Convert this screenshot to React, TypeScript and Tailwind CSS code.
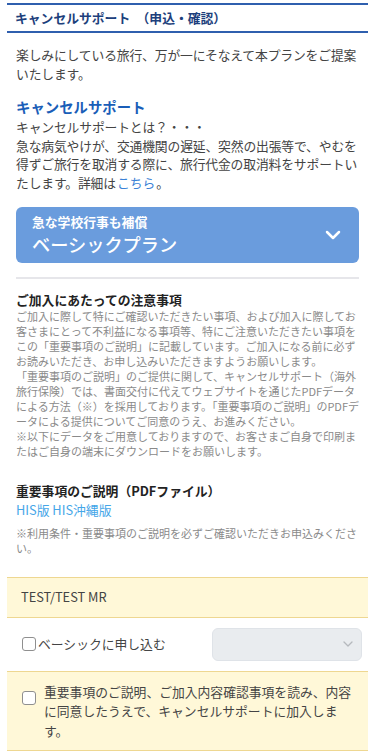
import React from "react";

const jp = { fontFamily: '"Noto Sans CJK JP", "Noto Sans", sans-serif' };

function Box() {
  return <span className="inline-block w-[14px] h-[14px] shrink-0 rounded-[3px] border border-[#8f8f8f] bg-white" />;
}

export default function App() {
  return (
    <div style={jp} className="w-[375px] min-h-[755px] bg-white px-[7px] pt-[3px] text-[#444]">
      <div className="border-y-2 border-[#2f5fae] h-[30px] flex items-center px-[8px]">
        <span className="text-[12.8px] font-bold text-[#1d3f7c] leading-none whitespace-pre">キャンセルサポート　（申込・確認）</span>
      </div>

      <div className="px-[9px]">
        <p className="mt-[13px] text-[12.8px] tracking-[-0.15px] leading-[18.6px] text-[#444]">
          楽しみにしている旅行、万が一にそなえて本プランをご提案いたします。
        </p>

        <h2 className="mt-[13px] text-[14.4px] leading-[21px] font-bold text-[#1a5eb8]">キャンセルサポート</h2>
        <p className="mt-[1px] text-[12.8px] tracking-[-0.15px] leading-[18.6px] text-[#444]">
          キャンセルサポートとは？・・・
          <br />
          急な病気やけが、交通機関の遅延、突然の出張等で、やむを得ずご旅行を取消する際に、旅行代金の取消料をサポートいたします。詳細は<a className="inline-block mx-[1px] tracking-normal leading-[18.6px] text-[#3b82d6]">こちら</a>。
        </p>

        <div className="mt-[14px] h-[56px] rounded-[6px] bg-[#6a9cdd] flex items-center justify-between pl-[16px] pr-[18px]">
          <div className="flex flex-col text-white">
            <span className="block text-[12.8px] font-bold leading-[19px]">急な学校行事も補償</span>
            <span className="block text-[18.2px] font-medium leading-[26px]">ベーシックプラン</span>
          </div>
          <svg width="16" height="10" viewBox="0 0 16 10" fill="none">
            <path d="M2 2l6 6 6-6" stroke="white" strokeWidth="2.5" strokeLinecap="round" strokeLinejoin="round" />
          </svg>
        </div>

        <div className="mt-[14px] h-[2px] bg-[#e6e6ea]" />

        <h3 className="mt-[11px] text-[12.8px] leading-[19px] font-bold text-[#222]">ご加入にあたっての注意事項</h3>
        <p className="text-[11px] leading-[15px] text-[#8a8a8a]">
          ご加入に際して特にご確認いただきたい事項、および加入に際してお客さまにとって不利益になる事項等、特にご注意いただきたい事項をこの「重要事項のご説明」に記載しています。ご加入になる前に必ずお読みいただき、お申し込みいただきますようお願いします。
          <br />
          「重要事項のご説明」のご提供に関して、キャンセルサポート（海外旅行保険）では、書面交付に代えてウェブサイトを通じたPDFデータによる方法（※）を採用しております。「重要事項のご説明」のPDFデータによる提供についてご同意のうえ、お進みください。
          <br />
          ※以下にデータをご用意しておりますので、お客さまご自身で印刷またはご自身の端末にダウンロードをお願いします。
        </p>

        <h3 className="mt-[22px] text-[12.8px] leading-[19px] font-bold text-[#222]">重要事項のご説明（PDFファイル）</h3>
        <p className="text-[12.8px] leading-[19px] text-[#45a6e8]">HIS版 HIS沖縄版</p>
        <p className="mt-[7px] text-[11px] leading-[15px] text-[#8a8a8a]">
          ※利用条件・重要事項のご説明を必ずご確認いただきお申込みください。
        </p>
      </div>

      <div className="mt-[21px] border-y border-[#eed791] bg-[#fff8d8] h-[41px] flex items-center px-[14px]">
        <span className="text-[12.8px] text-[#444]">TEST/TEST MR</span>
      </div>

      <div className="h-[53px] flex items-center justify-between pl-[15px] pr-[6px]">
        <label className="flex items-center gap-[2px] text-[12.8px] text-[#444]">
          <Box />
          <span>ベーシックに申し込む</span>
        </label>
        <div className="w-[150px] h-[33px] rounded-[6px] border border-[#dfe3e8] bg-[#e9ecef] flex items-center justify-end pr-[8px]">
          <svg width="10" height="6" viewBox="0 0 10 6" fill="none">
            <path d="M1 1l4 4 4-4" stroke="#b5b9bd" strokeWidth="1.3" strokeLinecap="round" strokeLinejoin="round" />
          </svg>
        </div>
      </div>

      <div className="border-y border-[#eed791] bg-[#fff8d8] pt-[10px] pb-[10px] pl-[15px] pr-[16px] flex gap-[8px]">
        <span className="mt-[4px]"><Box /></span>
        <p className="text-[12.8px] leading-[19.5px] text-[#444]">
          重要事項のご説明、ご加入内容確認事項を読み、内容に同意したうえで、キャンセルサポートに加入します。
        </p>
      </div>
    </div>
  );
}
